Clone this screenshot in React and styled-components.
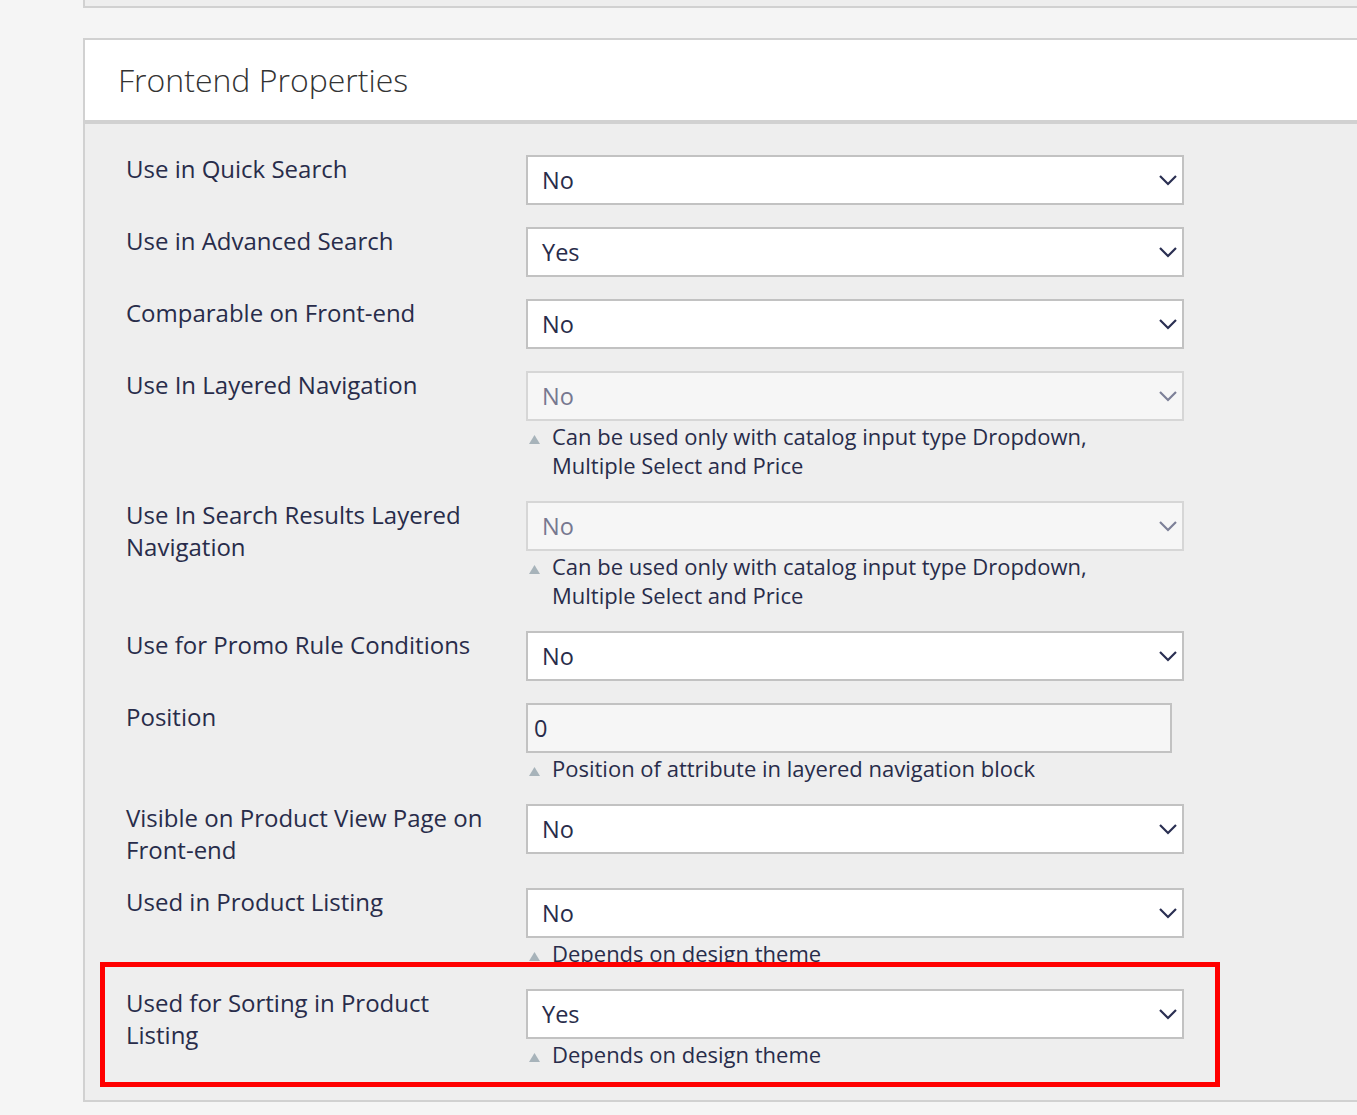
import React from 'react';
import styled, { createGlobalStyle } from 'styled-components';

const GlobalStyle = createGlobalStyle`
  html, body {
    margin: 0;
    padding: 0;
    background: #f5f5f5;
    overflow: hidden;
  }
  body {
    font-family: 'Open Sans', 'DejaVu Sans', sans-serif;
    color: #282c4a;
  }
`;

const Page = styled.div`
  padding-left: 83px;
  width: 1274px;
`;

const PrevPanel = styled.div`
  height: 6px;
  background: #eeeeee;
  border-left: 2px solid #d1d1d1;
  border-bottom: 2px solid #d1d1d1;
  margin-bottom: 30px;
`;

const Panel = styled.section`
  border: 2px solid #d1d1d1;
  border-right: none;
  background: #eeeeee;
`;

const Header = styled.div`
  background: #fff;
  height: 80px;
  border-bottom: 4px solid #d1d1d1;
  display: flex;
  align-items: center;
  padding-left: 33px;
`;

const Title = styled.h2`
  margin: 0 0 2px;
  font-weight: 300;
  font-size: 32px;
  color: #333;
`;

const Fieldset = styled.div`
  padding: 31px 0 32px 41px;
  display: flex;
  flex-direction: column;
  gap: 22px;
`;

const Row = styled.div`
  position: relative;
  display: grid;
  grid-template-columns: 400px 658px;
  align-items: start;
`;

const Label = styled.div`
  font-size: 24px;
  line-height: 32px;
  width: 366px;
  margin-top: -2px;
`;

const Control = styled.div`
  display: flex;
  flex-direction: column;
`;

const SelectBox = styled.div`
  box-sizing: border-box;
  height: 50px;
  border: 2px solid ${(p) => (p.disabled ? '#d6d6d6' : '#c2c2c2')};
  background: ${(p) => (p.disabled ? '#f6f6f6' : '#fff')};
  color: ${(p) => (p.disabled ? '#767890' : '#282c4a')};
  display: flex;
  align-items: center;
  justify-content: space-between;
  padding: 0 4px 0 14px;
  font-size: 23.5px;
`;

const TextInput = styled.div`
  box-sizing: border-box;
  width: 646px;
  height: 50px;
  border: 2px solid #c2c2c2;
  background: #f6f6f6;
  display: flex;
  align-items: center;
  padding-left: 6px;
  font-size: 23.5px;
`;

const Note = styled.div`
  display: flex;
  align-items: flex-start;
  gap: 12px;
  font-size: 22px;
  line-height: 29px;
  padding-left: 3px;
  margin-top: 1px;
  margin-bottom: -1px;
`;

const NoteText = styled.div`
  max-width: 580px;
`;

const Highlight = styled.div`
  position: absolute;
  top: -27px;
  bottom: -19px;
  left: -26px;
  width: 1120px;
  box-sizing: border-box;
  border: 5px solid #ff0000;
  pointer-events: none;
`;

const Chevron = ({ disabled }) => (
  <svg width="20" height="12" viewBox="0 0 20 12">
    <polyline
      points="2,2 10,10 18,2"
      fill="none"
      stroke={disabled ? '#7d8098' : '#2a2f52'}
      strokeWidth="2.2"
    />
  </svg>
);

const Triangle = () => (
  <svg width="11" height="29" viewBox="0 0 11 29">
    <polygon points="0,22 5.5,13 11,22" fill="#a7b3ba" />
  </svg>
);

const rows = [
  { label: 'Use in Quick Search', value: 'No' },
  { label: 'Use in Advanced Search', value: 'Yes' },
  { label: 'Comparable on Front-end', value: 'No' },
  {
    label: 'Use In Layered Navigation',
    value: 'No',
    disabled: true,
    note: 'Can be used only with catalog input type Dropdown, Multiple Select and Price',
  },
  {
    label: 'Use In Search Results Layered Navigation',
    value: 'No',
    disabled: true,
    note: 'Can be used only with catalog input type Dropdown, Multiple Select and Price',
  },
  { label: 'Use for Promo Rule Conditions', value: 'No' },
  { label: 'Position', value: '0', input: true, note: 'Position of attribute in layered navigation block' },
  { label: 'Visible on Product View Page on Front-end', value: 'No' },
  { label: 'Used in Product Listing', value: 'No', note: 'Depends on design theme' },
  { label: 'Used for Sorting in Product Listing', value: 'Yes', note: 'Depends on design theme', highlight: true },
];

function App() {
  return (
    <>
      <GlobalStyle />
      <Page>
        <PrevPanel />
        <Panel>
          <Header>
            <Title>Frontend Properties</Title>
          </Header>
          <Fieldset>
            {rows.map((r) => (
              <Row key={r.label}>
                <Label>{r.label}</Label>
                <Control>
                  {r.input ? (
                    <TextInput>{r.value}</TextInput>
                  ) : (
                    <SelectBox disabled={r.disabled}>
                      <span>{r.value}</span>
                      <Chevron disabled={r.disabled} />
                    </SelectBox>
                  )}
                  {r.note && (
                    <Note>
                      <Triangle />
                      <NoteText>{r.note}</NoteText>
                    </Note>
                  )}
                </Control>
                {r.highlight && <Highlight />}
              </Row>
            ))}
          </Fieldset>
        </Panel>
      </Page>
    </>
  );
}

export default App;
